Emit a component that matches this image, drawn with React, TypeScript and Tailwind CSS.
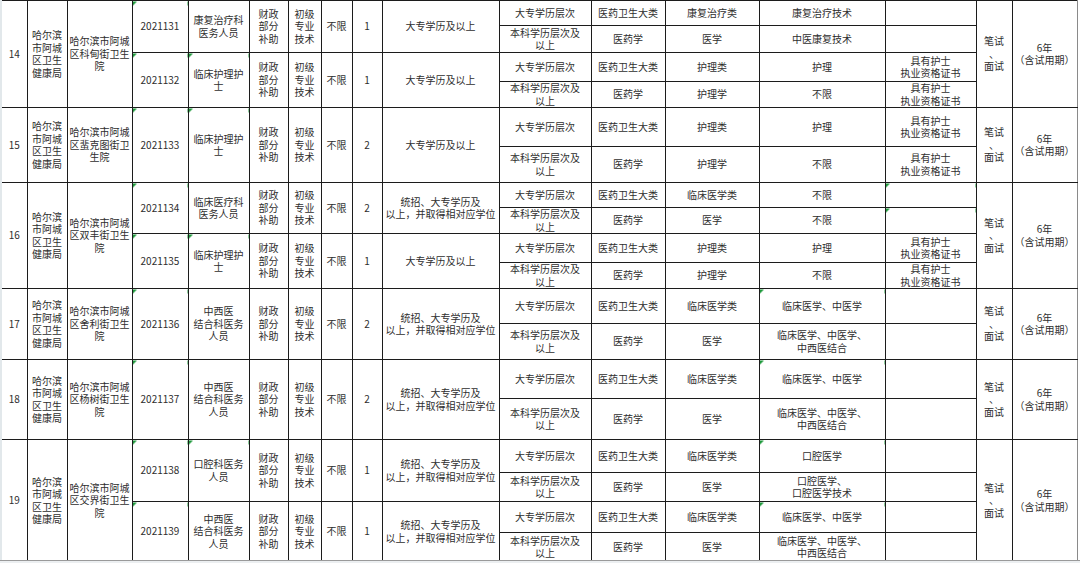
import React from "react";

type Sub = {
  h: number;
  lvl: React.ReactNode;
  big: string;
  cls: string;
  major: React.ReactNode;
  cond?: React.ReactNode;
  triMajor?: boolean;
  triCond?: boolean;
};
type Pos = {
  code: string;
  name: React.ReactNode;
  cnt: string;
  edu: React.ReactNode;
  triName?: boolean;
  subs: Sub[];
};
type Group = { no: string; unit: React.ReactNode; pos: Pos[] };

const BEN = (
  <>
    本科学历层次及
    <br />
    以上
  </>
);
const NURSE = (
  <>
    具有护士
    <br />
    执业资格证书
  </>
);
const TZ = (
  <>
    统招、大专学历及
    <br />
    以上，并取得相对应学位
  </>
);
const ZXY = (
  <>
    中西医
    <br />
    结合科医务
    <br />
    人员
  </>
);
const ZXYMAJ = (
  <>
    临床医学、中医学、
    <br />
    中西医结合
  </>
);
const HLHS = (
  <>
    临床护理护
    <br />
    士
  </>
);

const groups: Group[] = [
  {
    no: "14",
    unit: (
      <>
        哈尔滨市阿城
        <br />
        区科甸街卫生
        <br />
        院
      </>
    ),
    pos: [
      {
        code: "2021131",
        name: (
          <>
            康复治疗科
            <br />
            医务人员
          </>
        ),
        cnt: "1",
        edu: "大专学历及以上",
        subs: [
          { h: 25, lvl: "大专学历层次", big: "医药卫生大类", cls: "康复治疗类", major: "康复治疗技术" },
          { h: 27, lvl: BEN, big: "医药学", cls: "医学", major: "中医康复技术" },
        ],
      },
      {
        code: "2021132",
        name: HLHS,
        triName: true,
        cnt: "1",
        edu: "大专学历及以上",
        subs: [
          { h: 29, lvl: "大专学历层次", big: "医药卫生大类", cls: "护理类", major: "护理", cond: NURSE },
          { h: 26, lvl: BEN, big: "医药学", cls: "护理学", major: "不限", cond: NURSE },
        ],
      },
    ],
  },
  {
    no: "15",
    unit: (
      <>
        哈尔滨市阿城
        <br />
        区蜚克图街卫
        <br />
        生院
      </>
    ),
    pos: [
      {
        code: "2021133",
        name: HLHS,
        triName: true,
        cnt: "2",
        edu: "大专学历及以上",
        subs: [
          { h: 39, lvl: "大专学历层次", big: "医药卫生大类", cls: "护理类", major: "护理", cond: NURSE },
          { h: 36, lvl: BEN, big: "医药学", cls: "护理学", major: "不限", cond: NURSE },
        ],
      },
    ],
  },
  {
    no: "16",
    unit: (
      <>
        哈尔滨市阿城
        <br />
        区双丰街卫生
        <br />
        院
      </>
    ),
    pos: [
      {
        code: "2021134",
        name: (
          <>
            临床医疗科
            <br />
            医务人员
          </>
        ),
        cnt: "2",
        edu: TZ,
        subs: [
          { h: 25, lvl: "大专学历层次", big: "医药卫生大类", cls: "临床医学类", major: "不限", triCond: true },
          { h: 25, lvl: BEN, big: "医药学", cls: "医学", major: "不限", triCond: true },
        ],
      },
      {
        code: "2021135",
        name: HLHS,
        triName: true,
        cnt: "1",
        edu: "大专学历及以上",
        subs: [
          { h: 29, lvl: "大专学历层次", big: "医药卫生大类", cls: "护理类", major: "护理", cond: NURSE },
          { h: 26, lvl: BEN, big: "医药学", cls: "护理学", major: "不限", cond: NURSE },
        ],
      },
    ],
  },
  {
    no: "17",
    unit: (
      <>
        哈尔滨市阿城
        <br />
        区舍利街卫生
        <br />
        院
      </>
    ),
    pos: [
      {
        code: "2021136",
        name: ZXY,
        cnt: "2",
        edu: TZ,
        subs: [
          { h: 35, lvl: "大专学历层次", big: "医药卫生大类", cls: "临床医学类", major: "临床医学、中医学", triMajor: true },
          { h: 36, lvl: BEN, big: "医药学", cls: "医学", major: ZXYMAJ },
        ],
      },
    ],
  },
  {
    no: "18",
    unit: (
      <>
        哈尔滨市阿城
        <br />
        区杨树街卫生
        <br />
        院
      </>
    ),
    pos: [
      {
        code: "2021137",
        name: ZXY,
        cnt: "2",
        edu: TZ,
        subs: [
          { h: 39, lvl: "大专学历层次", big: "医药卫生大类", cls: "临床医学类", major: "临床医学、中医学", triMajor: true },
          { h: 41, lvl: BEN, big: "医药学", cls: "医学", major: ZXYMAJ },
        ],
      },
    ],
  },
  {
    no: "19",
    unit: (
      <>
        哈尔滨市阿城
        <br />
        区交界街卫生
        <br />
        院
      </>
    ),
    pos: [
      {
        code: "2021138",
        name: (
          <>
            口腔科医务
            <br />
            人员
          </>
        ),
        triName: true,
        cnt: "1",
        edu: TZ,
        subs: [
          { h: 33, lvl: "大专学历层次", big: "医药卫生大类", cls: "临床医学类", major: "口腔医学", triMajor: true },
          {
            h: 29,
            lvl: BEN,
            big: "医药学",
            cls: "医学",
            major: (
              <>
                口腔医学、
                <br />
                口腔医学技术
              </>
            ),
          },
        ],
      },
      {
        code: "2021139",
        name: ZXY,
        cnt: "1",
        edu: TZ,
        subs: [
          { h: 31, lvl: "大专学历层次", big: "医药卫生大类", cls: "临床医学类", major: "临床医学、中医学", triMajor: true },
          { h: 29, lvl: BEN, big: "医药学", cls: "医学", major: ZXYMAJ },
        ],
      },
    ],
  },
];

const cell = "border border-[#1c1c1c] text-center align-middle p-0 leading-[12.5px]";
const tri = " bg-[linear-gradient(135deg,#1f9a3c_3.5px,transparent_3.5px)]";

export default function App() {
  const rows: React.ReactNode[] = [];
  groups.forEach((g) => {
    const total = g.pos.reduce((a, p) => a + p.subs.length, 0);
    let firstG = true;
    g.pos.forEach((p) => {
      p.subs.forEach((s, si) => {
        const firstP = si === 0;
        rows.push(
          <tr key={p.code + si} style={{ height: s.h }}>
            {firstG && (
              <>
                <td rowSpan={total} className={cell + " border-l-0"}>
                  {g.no}
                </td>
                <td rowSpan={total} className={cell}>
                  哈尔滨
                  <br />
                  市阿城
                  <br />
                  区卫生
                  <br />
                  健康局
                </td>
                <td rowSpan={total} className={cell}>
                  {g.unit}
                </td>
              </>
            )}
            {firstP && (
              <>
                <td rowSpan={p.subs.length} className={cell + tri}>
                  {p.code}
                </td>
                <td rowSpan={p.subs.length} className={cell + (p.triName ? tri : "")}>
                  {p.name}
                </td>
                <td rowSpan={p.subs.length} className={cell}>
                  财政
                  <br />
                  部分
                  <br />
                  补助
                </td>
                <td rowSpan={p.subs.length} className={cell}>
                  初级
                  <br />
                  专业
                  <br />
                  技术
                </td>
                <td rowSpan={p.subs.length} className={cell}>
                  不限
                </td>
                <td rowSpan={p.subs.length} className={cell}>
                  {p.cnt}
                </td>
                <td rowSpan={p.subs.length} className={cell}>
                  {p.edu}
                </td>
              </>
            )}
            <td className={cell}>{s.lvl}</td>
            <td className={cell}>{s.big}</td>
            <td className={cell}>{s.cls}</td>
            <td className={cell + (s.triMajor ? tri : "")}>{s.major}</td>
            <td className={cell + (s.triCond ? tri : "")}>{s.cond}</td>
            {firstG && (
              <>
                <td rowSpan={total} className={cell}>
                  笔试
                  <br />、<br />
                  面试
                </td>
                <td rowSpan={total} className={cell + " border-r-[#8a8a8a]"}>
                  6年
                  <br />
                  （含试用期）
                </td>
              </>
            )}
          </tr>
        );
        firstG = false;
      });
    });
  });

  const widths = [25, 40, 65, 56, 61, 39, 33, 31, 30, 117, 92, 74, 94, 126, 91, 36, 65];

  return (
    <div
      className="w-[1080px] h-[563px] overflow-hidden bg-white flex flex-col text-[10px] text-[#2e2e2e]"
      style={{ fontFamily: '"Noto Sans CJK SC", "Noto Sans", sans-serif' }}
    >
      <div className="flex h-[560px] shrink-0 overflow-hidden">
        <div className="w-[2px] shrink-0 bg-[#e2e8eb]" />
        <table className="table-fixed border-collapse w-[1075px] shrink-0">
          <colgroup>
            {widths.map((w, i) => (
              <col key={i} style={{ width: w }} />
            ))}
          </colgroup>
          <tbody>{rows}</tbody>
        </table>
        <div className="flex-1 bg-white" />
      </div>
      <div className="flex-1 bg-[#eceff1] border-t border-[#9a9a9a]" />
    </div>
  );
}
